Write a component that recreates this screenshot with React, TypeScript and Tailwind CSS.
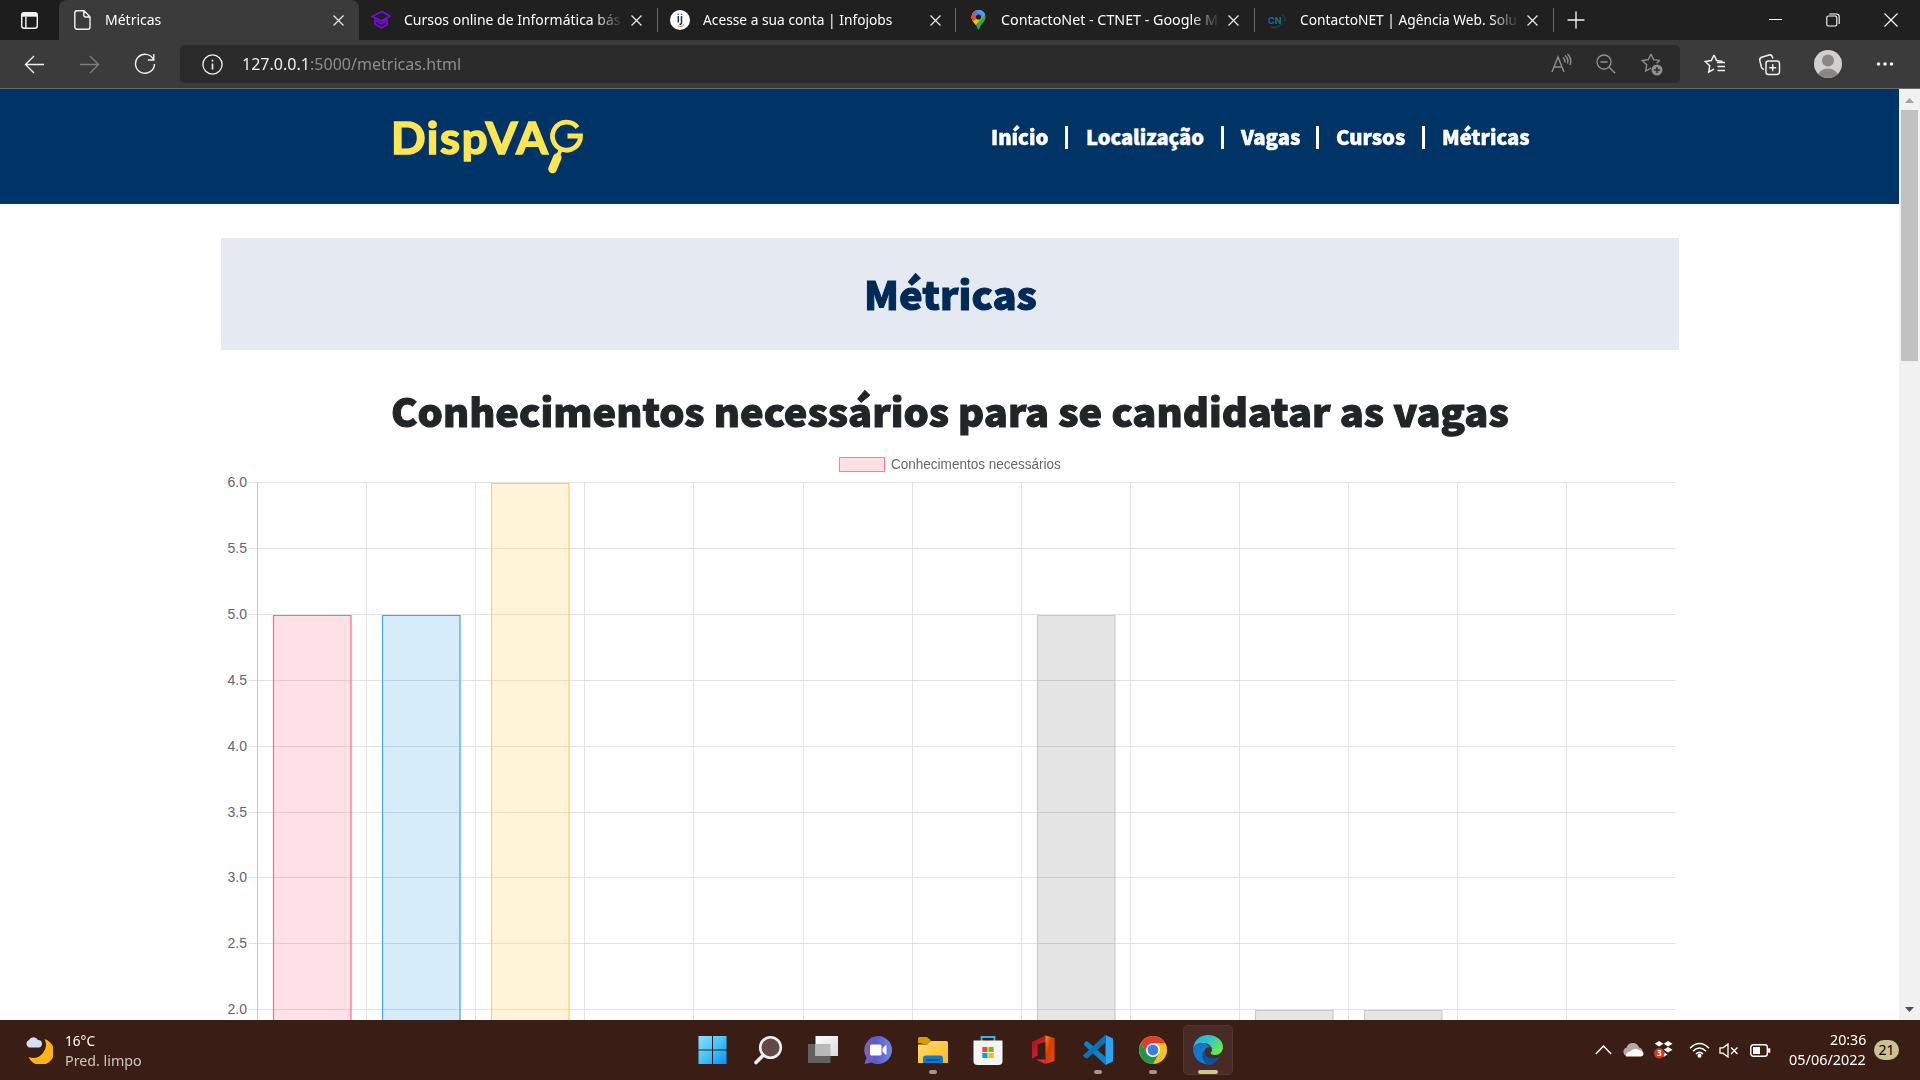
import React, { useLayoutEffect, useRef } from "react";

/* Text squeezed or stretched horizontally to fill the width of its box. */
function Fit({ className = "", children }: { className?: string; children: React.ReactNode }) {
  const outer = useRef<HTMLSpanElement>(null);
  const inner = useRef<HTMLSpanElement>(null);
  useLayoutEffect(() => {
    if (outer.current && inner.current) {
      inner.current.style.transform = `scaleX(${outer.current.clientWidth / inner.current.offsetWidth})`;
    }
  }, []);
  return (
    <span ref={outer} className={`block shrink-0 ${className}`}>
      <span ref={inner} className="inline-block origin-left whitespace-nowrap">{children}</span>
    </span>
  );
}

function CloseIcon() {
  return (
    <svg className="size-[11px]" viewBox="0 0 11 11" fill="none" stroke="#e6e6e6" strokeWidth="1.3">
      <path d="M.5.5l10 10M10.5.5l-10 10" />
    </svg>
  );
}

function Tab({ icon, fade, children }: { icon: React.ReactNode; fade?: boolean; children: React.ReactNode }) {
  return (
    <div className="flex h-10 w-[298.7px] items-center">
      <div className="ml-[12px] flex w-5 justify-center">{icon}</div>
      <div
        className={
          fade
            ? "ml-[13px] w-[217px] pb-[2px] [mask-image:linear-gradient(to_right,#000_190px,transparent_219px)]"
            : "ml-[13px] w-[217px] pb-[2px]"
        }
      >
        {children}
      </div>
      <div className="ml-[10px] flex w-[11px] pt-px"><CloseIcon /></div>
      <div className="ml-auto h-6 w-px bg-[#6a6a6a]" />
    </div>
  );
}

function TabBar() {
  return (
    <div className="flex h-10 bg-[#202020] text-[15px] leading-[20px] text-white">
      <div className="flex w-[59px] items-center justify-center rounded-br-[6px] bg-[#1d1d1d]">
        <svg className="size-[19px]" viewBox="0 0 20 20" fill="none" stroke="#f2f2f2" strokeWidth="1.5">
          <rect x="1.8" y="1.8" width="16.4" height="16.4" rx="2.6" />
          <path d="M6.2 6v12" />
          <path d="M2 4h16" strokeWidth="4" />
        </svg>
      </div>
      <div className="flex w-[300px] items-center rounded-t-[8px] bg-[#3b3b3b]">
        <svg className="ml-[15px] h-5 w-[17px]" viewBox="0 0 17 20" fill="none" stroke="#f2f2f2" strokeWidth="1.4">
          <path d="M3 .8h7l6 6V17a2.200 2.200 0 0 1-2.200 2.200H3A2.200 2.200 0 0 1 .8 17V3A2.200 2.200 0 0 1 3 .8zM9.800 1v4.200a1.800 1.800 0 0 0 1.800 1.800H16" />
        </svg>
        <Fit className="ml-[14px] w-[56px] pb-[2px]">Métricas</Fit>
        <div className="mr-[15px] ml-auto pt-px"><CloseIcon /></div>
      </div>
      <Tab
        fade
        icon={
          <svg className="size-5" viewBox="0 0 20 20" fill="none" stroke="#7a08e6" strokeWidth="1.700" strokeLinejoin="round">
            <path d="M1 6.500L11 1.500l8 4.500-8.500 5L1 6.500zM4 9v5l6.500 4 5.500-3.500V9.500l-5.500 4.500L5 10.500" />
          </svg>
        }
      >
        <Fit className="w-[216px]">Cursos online de Informática bás</Fit>
      </Tab>
      <Tab
        icon={
          <svg className="size-5" viewBox="0 0 20 20">
            <circle cx="10" cy="10" r="10" fill="#fff" />
            <path d="M8.300 6v6.500M11.500 6v6.500q0 2-2 1.800M8.300 3.800v1M11.500 3.800v1" stroke="#16335f" strokeWidth="1.500" fill="none" />
            <path d="M8 15.800q3.500 1.800 6-1.300" stroke="#f27d32" strokeWidth="1.100" fill="none" />
          </svg>
        }
      >
        <Fit className="w-[189px]">Acesse a sua conta | Infojobs</Fit>
      </Tab>
      <Tab
        fade
        icon={
          <svg className="h-5 w-[15px]" viewBox="0 0 15 20">
            <defs><clipPath id="pin"><path d="M7.500 0a7 7 0 0 1 7 7c0 5-5.200 7-6.200 12q-.8 1.600-1.600 0C5.700 14 .5 12 .5 7a7 7 0 0 1 7-7z" /></clipPath></defs>
            <g clipPath="url(#pin)">
              <path d="M0 0h15v20H0z" fill="#34a853" />
              <path d="M0 0h15v3L4 16H0z" fill="#fbbc04" />
              <path d="M0 0h15v3L8 10 0 5z" fill="#4285f4" />
              <path d="M0 0h6L2.500 4.500 6 8l-3.500 3L0 9z" fill="#ea4335" />
              <path d="M5 0h10v6L10 5z" fill="#4c9bf5" />
            </g>
            <circle cx="7.500" cy="7" r="2.600" fill="#202020" />
          </svg>
        }
      >
        <Fit className="w-[217px]">ContactoNet - CTNET - Google M</Fit>
      </Tab>
      <Tab
        fade
        icon={
          <svg className="size-5" viewBox="0 0 20 20">
            <text x="1" y="13.500" fontSize="9" fontWeight="700" fill="#0f6f96" fontFamily="Inter, sans-serif">CN</text>
            <path d="M4 17q7 1.500 12-3.500M15.500 4.500q3 2.500 2.500 7" stroke="#155068" strokeWidth="1" fill="none" />
          </svg>
        }
      >
        <Fit className="w-[217px]">ContactoNET | Agência Web. Solu</Fit>
      </Tab>
      <div className="ml-[13px] flex items-center pb-px">
        <svg className="size-[18px]" viewBox="0 0 18 18" stroke="#f2f2f2" strokeWidth="1.400"><path d="M9 .5v17M.5 9h17" /></svg>
      </div>
      <div className="ml-auto flex items-center pb-px">
        <div className="flex w-[57px] justify-center"><div className="h-px w-[13px] bg-white" /></div>
        <div className="flex w-[58px] justify-center">
          <svg className="size-[14px]" viewBox="0 0 14 14" fill="none" stroke="#fff" strokeWidth="1.100">
            <rect x=".8" y="3" width="10" height="10" rx="1.500" /><path d="M3.200 1h7.300a2.700 2.700 0 0 1 2.700 2.700V11" />
          </svg>
        </div>
        <div className="flex w-[58px] justify-center">
          <svg className="size-[14px]" viewBox="0 0 14 14" stroke="#fff" strokeWidth="1.100"><path d="M.5.5l13 13M13.500.5l-13 13" /></svg>
        </div>
      </div>
    </div>
  );
}

const star = "M11 2l2.600 5.600 6 .8M11 2L8.300 7.600l-6 .9 4.400 4.300-1 6.200 5.300-2.900";

function Toolbar() {
  return (
    <div className="flex h-[49px] items-center border-b border-[#6b6b6b] bg-[#3b3b3b] text-[#f0f0f0]">
      <svg className="ml-[24px] size-[21px]" viewBox="0 0 22 22" fill="none" stroke="currentColor" strokeWidth="1.400"><path d="M21 11H1.500M10.500 2L1.500 11l9 9" /></svg>
      <svg className="ml-[34px] size-[21px] text-[#7d7d7d]" viewBox="0 0 22 22" fill="none" stroke="currentColor" strokeWidth="1.400"><path d="M1 11h19.500M11.500 2l9 9-9 9" /></svg>
      <svg className="ml-[34px] size-[22px]" viewBox="0 0 22 22" fill="none" stroke="currentColor" strokeWidth="1.400"><path d="M19.500 6.500A9.500 9.500 0 1 0 20.500 11M19.800 1v6h-6" /></svg>
      <div className="ml-[24px] flex h-[38px] w-[1500px] items-center rounded-[5px] bg-[#2b2b2b]">
        <svg className="ml-[22px] size-[21px]" viewBox="0 0 21 21" fill="none" stroke="currentColor" strokeWidth="1.300"><circle cx="10.500" cy="10.500" r="9.600" /><path d="M10.500 9.500v6M10.500 5.700v1.800" strokeWidth="1.600" /></svg>
        <Fit className="ml-[19px] w-[219px] pb-px text-[17px]">127.0.0.1<span className="text-[#8e8e8e]">:5000/metricas.html</span></Fit>
        <div className="mr-[16px] ml-auto flex items-center gap-[23px] text-[#8f8f8f]">
          <svg className="size-[22px]" viewBox="0 0 22 22" fill="none" stroke="currentColor" strokeWidth="1.400"><path d="M2 19L8 4l6 15M4.200 14h7.600M13 4.500q2.500 2 1.800 5M15 2.500q4 3 2.500 8M17.500 1q5 4.500 2.500 11" /></svg>
          <svg className="size-[22px]" viewBox="0 0 22 22" fill="none" stroke="currentColor" strokeWidth="1.400"><circle cx="9" cy="9" r="7" /><path d="M14.200 14.200l6 6M5.500 9h7" /></svg>
          <svg className="size-[24px]" viewBox="0 0 24 24" fill="none" stroke="currentColor" strokeWidth="1.400"><path d={star} /><path d="M19.600 8.400l-3 2.800" /><circle cx="17" cy="18" r="5.500" fill="currentColor" stroke="none" /><path d="M17 15v6M14 18h6" stroke="#2b2b2b" /></svg>
        </div>
      </div>
      <svg className="ml-[23px] size-[23px]" viewBox="0 0 23 23" fill="none" stroke="currentColor" strokeWidth="1.500"><path d={star} /><path d="M14 9.500h8M14.500 13.500H22M14.500 17.500H22" /></svg>
      <svg className="ml-[32px] size-[23px]" viewBox="0 0 23 23" fill="none" stroke="currentColor" strokeWidth="1.500"><rect x="8" y="8" width="13.500" height="13.500" rx="2.500" /><path d="M14.700 11.300v7M11.200 14.800h7M6 16.500q-2-.3-2.600-2.500L1.800 7.500Q1.300 5 3.600 4.200L11 2q2.600-.6 3.300 1.800l.5 1.700" /></svg>
      <svg className="ml-[33px] size-[28px]" viewBox="0 0 28 28"><defs><clipPath id="av"><circle cx="14" cy="14" r="14" /></clipPath></defs><g clipPath="url(#av)"><path d="M0 0h28v28H0z" fill="#d2d0ce" /><circle cx="14" cy="10.500" r="6" fill="#8a8886" /><ellipse cx="14" cy="26" rx="10" ry="7.500" fill="#8a8886" /></g></svg>
      <svg className="ml-[34px] size-[18px]" viewBox="0 0 18 18" fill="currentColor"><circle cx="2.500" cy="9" r="1.800" /><circle cx="9" cy="9" r="1.800" /><circle cx="15.500" cy="9" r="1.800" /></svg>
    </div>
  );
}

function Pipe({ className }: { className: string }) {
  return <span className={`h-[23px] w-[3px] shrink-0 bg-white ${className}`} />;
}

function SiteHeader() {
  return (
    <header className="flex h-[115px] items-start bg-[#003366]">
      <div className="mt-[27px] ml-[391px] flex h-[60px] w-[200px] items-start text-[#ffe550]">
        <Fit className="w-[159px] font-[Lato] text-[43px] leading-[44px] font-bold tracking-[1.500px] [-webkit-text-stroke:1.500px_#ffe550]">DispVA</Fit>
        <svg aria-label="G" className="mt-[3px] -ml-[3px] h-[56px] w-[38px]" viewBox="0 0 38 56" fill="none" stroke="currentColor">
          <path d="M30.500 8.500A14 14 0 1 0 33.500 17H20.500" strokeWidth="4.800" />
          <path d="M13.500 31l-3 7" strokeWidth="4" />
          <path d="M10.300 38.500L5.500 50" strokeWidth="8.500" strokeLinecap="round" />
        </svg>
      </div>
      <nav className="mt-[32px] ml-[400px] flex items-center font-['Noto_Sans_CJK_SC',sans-serif] text-[20px] leading-8 font-black text-white [-webkit-text-stroke:0.500px]">
        <Fit className="w-[57px]">Início</Fit>
        <Pipe className="ml-[17px]" />
        <Fit className="ml-[18px] w-[118px]">Localização</Fit>
        <Pipe className="ml-[17px]" />
        <Fit className="ml-[17px] w-[59px]">Vagas</Fit>
        <Pipe className="ml-[16px]" />
        <Fit className="ml-[17px] w-[69px]">Cursos</Fit>
        <Pipe className="ml-[17px]" />
        <Fit className="ml-[17px] w-[88px]">Métricas</Fit>
      </nav>
    </header>
  );
}

const rows = ["6.0", "5.5", "5.0", "4.5", "4.0", "3.5", "3.0", "2.5", "2.0"];
const bars = [
  { col: 0, value: 5, fill: "rgba(255,99,132,.2)", line: "#f76c8b" },
  { col: 1, value: 5, fill: "rgba(54,162,235,.2)", line: "#45a3e0" },
  { col: 2, value: 6, fill: "rgba(255,205,86,.23)", line: "#fbcf62" },
  { col: 7, value: 5, fill: "rgba(0,0,0,.1)", line: "#cbcbcb" },
  { col: 9, value: 2, fill: "rgba(0,0,0,.1)", line: "#cbcbcb" },
  { col: 10, value: 2, fill: "rgba(0,0,0,.1)", line: "#cbcbcb" },
];
const STEP_X = 109.08;
const STEP_Y = 65.9;
const AXIS_X = 36.65;
const TOP = 5.5;

/* Bar chart; the origin of the drawing is the left edge of the content column. */
function Chart() {
  return (
    <svg className="block h-[543px] w-[1458px] overflow-visible" viewBox="0 0 1458 543">
      {rows.map((label, i) => {
        const y = Math.floor(TOP + STEP_Y * i) + 0.5;
        return (
          <g key={label}>
            <path d={`M28 ${y}H1454.500`} stroke="#e3e3e3" />
            <text x="26" y={y + 4.5} textAnchor="end" fontSize="14" fill="#666" fontFamily="Liberation Sans, sans-serif">{label}</text>
          </g>
        );
      })}
      {Array.from({ length: 13 }, (_, i) => (
        <path key={i} d={`M${Math.floor(AXIS_X + STEP_X * i) + 0.5} 5V543`} stroke={i === 0 ? "#c9c9c9" : "#e3e3e3"} />
      ))}
      {bars.map((b) => {
        const x = Math.round(AXIS_X + STEP_X * b.col + 15.3) + 0.5;
        const y = Math.floor(TOP + STEP_Y * 2 * (6 - b.value)) + 1.500;
        return <path key={b.col} d={`M${x} 560V${y}h77.500V560`} fill={b.fill} stroke={b.line} strokeWidth="1.200" />;
      })}
    </svg>
  );
}

function Scrollbar() {
  return (
    <div className="flex w-[21px] shrink-0 flex-col items-center justify-between bg-[#f1f1f1]">
      <div className="flex flex-col items-center">
        <svg className="mt-[9px] h-[5px] w-[9px]" viewBox="0 0 9 5"><path d="M0 5l4.500-5L9 5z" fill="#a3a3a3" /></svg>
        <div className="mt-[7px] h-[251px] w-[17px] bg-[#c1c1c1]" />
      </div>
      <svg className="mb-[8px] h-[5px] w-[9px]" viewBox="0 0 9 5"><path d="M0 0l4.500 5L9 0z" fill="#505050" /></svg>
    </div>
  );
}

function Page() {
  return (
    <div className="flex h-[931px] overflow-hidden bg-white">
      <div className="flex h-full w-[1899px] flex-col">
        <SiteHeader />
        <main className="ml-[221px] flex w-[1458px] flex-col items-center">
          <div className="mt-[34px] flex h-[112px] w-full items-center justify-center bg-[#e4e9f2] pb-[2px] text-[#002a57]">
            <Fit className="w-[173px] font-['Noto_Sans_CJK_SC',sans-serif] text-[39px] leading-[56px] font-black [-webkit-text-stroke:1px]">Métricas</Fit>
          </div>
          <Fit className="mt-[32px] h-[56px] w-[1118px] font-['Noto_Sans_CJK_SC',sans-serif] text-[39px] leading-[56px] font-black text-[#212529] [-webkit-text-stroke:1px]">
            Conhecimentos necessários para se candidatar as vagas
          </Fit>
          <div className="mt-[18px] flex h-[16px] items-center">
            <div className="h-[15px] w-[46px] border border-[#fc7f9a] bg-[#ffe0e6]" />
            <Fit className="ml-[6px] w-[170px] font-['Liberation_Sans'] text-[14px] leading-[16px] text-[#666]">Conhecimentos necessários</Fit>
          </div>
          <div className="mt-[5px] h-[543px]"><Chart /></div>
        </main>
      </div>
      <Scrollbar />
    </div>
  );
}

function TaskApp({ children, dot }: { children: React.ReactNode; dot?: boolean }) {
  return (
    <div className="flex h-[60px] w-[55px] flex-col items-center pt-[15px]">
      <div className="flex size-[30px] items-center justify-center">{children}</div>
      {dot && <div className="mt-[5px] h-1 w-2 rounded-full bg-[#a39794]" />}
    </div>
  );
}

function TaskApps() {
  return (
    <div className="flex">
      <TaskApp>
        <svg className="size-[30px]" viewBox="0 0 30 30"><defs><linearGradient id="win" x1="0" y1="0" x2="1" y2="1"><stop stopColor="#86e3ff" /><stop offset=".5" stopColor="#43c4fb" /><stop offset="1" stopColor="#0a8df8" /></linearGradient></defs><path d="M.500 1H14v13.500H.500zM15 1h13.500v13.500H15zM.500 15.500H14V29H.500zM15 15.500h13.500V29H15z" fill="url(#win)" /></svg>
      </TaskApp>
      <TaskApp>
        <svg className="size-[30px]" viewBox="0 0 30 30" stroke="#eceff1"><circle cx="17.500" cy="12.500" r="10.300" fill="#614a43" strokeWidth="2.600" /><path d="M10 20.500l-7 7" strokeWidth="3.600" strokeLinecap="round" /></svg>
      </TaskApp>
      <TaskApp>
        <svg className="size-[30px]" viewBox="0 0 30 30"><defs><linearGradient id="tv" x2="1" y2="1"><stop stopColor="#fff" /><stop offset="1" stopColor="#d9d9d9" /></linearGradient></defs><path d="M0 9h22.500v19H0z" fill="#626262" /><path d="M7.500 1H30v20H7.500z" fill="url(#tv)" /><path d="M7.500 9h15v12h-15z" fill="#b9b9b9" /></svg>
      </TaskApp>
      <TaskApp>
        <svg className="size-[30px]" viewBox="0 0 30 30"><defs><linearGradient id="ch" x1="0" x2="1"><stop stopColor="#8561b8" /><stop offset=".4" stopColor="#5a5bc9" /><stop offset="1" stopColor="#6f87e4" /></linearGradient></defs><path d="M15 1a14 14 0 1 1-6.500 26.400L1.500 29l2-6.500A14 14 0 0 1 15 1z" fill="url(#ch)" /><rect x="7" y="9.500" width="11.500" height="11" rx="1.500" fill="#fff" /><path d="M20 13.500l3-3v9l-3-3z" fill="#fff" stroke="#fff" /></svg>
      </TaskApp>
      <TaskApp dot>
        <svg className="size-[30px]" viewBox="0 0 30 30"><defs><linearGradient id="fo" x2="1" y2="1"><stop stopColor="#ffdd70" /><stop offset="1" stopColor="#fbb916" /></linearGradient></defs><path d="M0 8V3.500Q0 2 1.500 2H9l3.500 3v5z" fill="#dc9b04" /><path d="M0 9.500h9.500L13 6h15.500Q30 6 30 7.500V28H0z" fill="url(#fo)" /><path d="M5 28v-4.500q0-3 3-3h14q3 0 3 3V28z" fill="#1177cf" /><path d="M8.500 25h13" stroke="#0b4d91" strokeWidth="1.500" /></svg>
      </TaskApp>
      <TaskApp>
        <svg className="size-[30px]" viewBox="0 0 30 30"><path d="M8.500 7V2h13v5" fill="none" stroke="#2bb8ea" strokeWidth="1.800" /><path d="M.5 5.500h29V26q0 4-4 4h-21q-4 0-4-4z" fill="#f3f5f6" /><path d="M9.300 12H14.500v5H9.300z" fill="#f25022" /><path d="M15.500 12h5.200v5h-5.200z" fill="#7fba00" /><path d="M9.300 18H14.500v5H9.300z" fill="#00a4ef" /><path d="M15.500 18h5.200v5h-5.200z" fill="#ffb900" /></svg>
      </TaskApp>
      <TaskApp>
        <svg className="size-[30px]" viewBox="0 0 30 30"><defs><linearGradient id="ofl" y2="1"><stop stopColor="#a30f16" /><stop offset=".5" stopColor="#c71c2c" /><stop offset="1" stopColor="#b9569c" /></linearGradient><linearGradient id="ofr" y2="1"><stop stopColor="#fb9500" /><stop offset=".4" stopColor="#d83b01" /><stop offset="1" stopColor="#e54b08" /></linearGradient></defs><path d="M4 7L17.500.5 20 6 9.500 9.500v11L4 23.500z" fill="url(#ofl)" /><path d="M17.500.5L26.500 3v23l-9 3z" fill="url(#ofr)" /><path d="M8 24.500h9.500V29z" fill="#e8274b" /></svg>
      </TaskApp>
      <TaskApp dot>
        <svg className="size-[30px]" viewBox="0 0 30 30"><path d="M1.500 7.500L4 6l18.500 16v8L1 10z" fill="#0d83ca" /><path d="M22 0v8L4 23.500 1.500 22.500 0 20.500z" fill="#0a72b8" /><path d="M22.500 0L30 3.500v23L22.500 30z" fill="#29a6f1" /></svg>
      </TaskApp>
      <TaskApp dot>
        <svg className="size-[28px]" viewBox="0 0 28 28"><circle cx="14" cy="14" r="14" fill="#fbc116" /><path d="M14 7h12.100A14 14 0 0 0 1.900 7l6 10z" fill="#e33b2e" /><path d="M1.880 7A14 14 0 0 0 14 28l6-10.500-12 0z" fill="#269445" /><circle cx="14" cy="14" r="7" fill="#fff" /><circle cx="14" cy="14" r="5.400" fill="#3b7ded" /></svg>
      </TaskApp>
      <div className="mt-[5px] ml-[3px] flex h-[50px] w-[50px] flex-col items-center rounded-[5px] border border-[#54382f] bg-[#472b24] pt-[9px]">
        <svg className="size-[30px]" viewBox="0 0 30 30"><defs><linearGradient id="e1" x2="1" y2=".6"><stop stopColor="#28a8e0" /><stop offset=".5" stopColor="#2fc4cc" /><stop offset="1" stopColor="#6bea4c" /></linearGradient><linearGradient id="e2" y2="1"><stop stopColor="#1b6fc0" /><stop offset="1" stopColor="#0d84dc" /></linearGradient></defs><path d="M0 14C1 5 7 0 15 0c9 0 15 6 15 12 0 5-4 8-8 8-3 0-5-1-4-2.500 2-2 1-7-4-9C8 7 2 9 0 14z" fill="url(#e1)" /><path d="M0 15C1 9 6 7 11 8.500c4 1 6 3 6 4-3-1-6 2-6 6 0 5 4 9 9 10A15 15 0 0 1 0 15z" fill="url(#e2)" /><path d="M12 14.500c-2 7 5 11.500 15 7C24 27 20 29.500 16 29.800 9 28 7 19 12 14.500z" fill="#0d51a0" /></svg>
        <div className="mt-[5px] h-1 w-5 rounded-full bg-[#cdc795]" />
      </div>
    </div>
  );
}

function Taskbar() {
  return (
    <div className="flex h-[60px] bg-[#3a1e15] text-[15px] leading-5 text-white">
      <div className="flex w-[685px] items-center">
        <svg className="ml-[25px] size-[28px]" viewBox="0 0 28 28"><path d="M19.500 3A13.300 13.300 0 1 1 3.500 21 13 13 0 0 0 19.500 3z" fill="#fdb515" /><path d="M4 11.500a4 4 0 0 1 0-7.500 5 5 0 0 1 9 0 3.800 3.800 0 0 1 1 7.500z" fill="#d3e0f5" /></svg>
        <div className="ml-[12px]">
          <Fit className="w-[30px]">16°C</Fit>
          <Fit className="w-[77px] text-[#cfc6c3]">Pred. limpo</Fit>
        </div>
      </div>
      <TaskApps />
      <div className="ml-auto flex items-center pr-[21px]">
        <svg className="h-[10px] w-[17px]" viewBox="0 0 17 10" fill="none" stroke="#fff" strokeWidth="1.400"><path d="M.8 9l7.700-8 7.700 8" /></svg>
        <svg className="ml-[11px] h-[14px] w-[21px]" viewBox="0 0 21 14"><path d="M4 13a4.200 4.200 0 0 1-.5-8.200A6.500 6.500 0 0 1 16 4.500 4.500 4.500 0 0 1 17 13z" fill="#b5a9a5" /><path d="M3 13.500q-1-4 4-5 5-4.500 9-1.500 5 1 4.500 4.500-.5 2-3 2z" fill="#fff" /></svg>
        <svg className="ml-[10px] h-[18px] w-[20px]" viewBox="0 0 20 18"><path d="M5 0l4.500 2.800L5 5.500.8 2.800zM14 0l4.500 2.800L14 5.500 9.800 2.800zM14 6l4.500 2.800L14 11.500 9.800 8.800zM9.500 11l4 2.500-4 2.500z" fill="#fff" /><circle cx="5.200" cy="12.300" r="5.200" fill="#cf3a20" /><text x="5.200" y="15.300" fontSize="8" fontWeight="700" fill="#fff" textAnchor="middle">3</text></svg>
        <svg className="ml-[15px] h-[16px] w-[21px]" viewBox="0 0 21 16" fill="none" stroke="#fff" strokeWidth="1.500"><path d="M1 6.200q9.500-9.500 19 0M4 9.200q6.500-6.400 13 0M7 12q3.500-3.200 7 0" /><circle cx="10.500" cy="13.700" r="1.300" fill="#fff" /></svg>
        <svg className="ml-[9px] h-[15px] w-[20px]" viewBox="0 0 20 15" fill="none" stroke="#fff" strokeWidth="1.300"><path d="M1 4.800h3L9 1v13l-5-3.800H1zM12 4.500l6.500 6.500M18.500 4.500L12 11" /></svg>
        <svg className="ml-[11px] h-[13px] w-[21px]" viewBox="0 0 21 13" fill="none" stroke="#fff" strokeWidth="1.400"><rect x=".8" y=".8" width="16.500" height="11.400" rx="2.500" /><rect x="3" y="3" width="7" height="7" fill="#fff" stroke="none" /><path d="M19.200 4.300v4.400" strokeWidth="2.200" /></svg>
        <div className="ml-[17px] flex w-[78px] flex-col items-end pb-[3px]">
          <Fit className="w-[36px]">20:36</Fit>
          <Fit className="w-[77px]">05/06/2022</Fit>
        </div>
        <div className="ml-[8px] flex h-[20px] w-[25px] items-center justify-center rounded-full bg-[#c9c292] text-[14px] text-black">21</div>
      </div>
    </div>
  );
}

export default function App() {
  return (
    <div className="flex h-[1080px] w-[1920px] flex-col overflow-hidden font-['Noto_Sans',sans-serif]">
      <TabBar />
      <Toolbar />
      <Page />
      <Taskbar />
    </div>
  );
}
